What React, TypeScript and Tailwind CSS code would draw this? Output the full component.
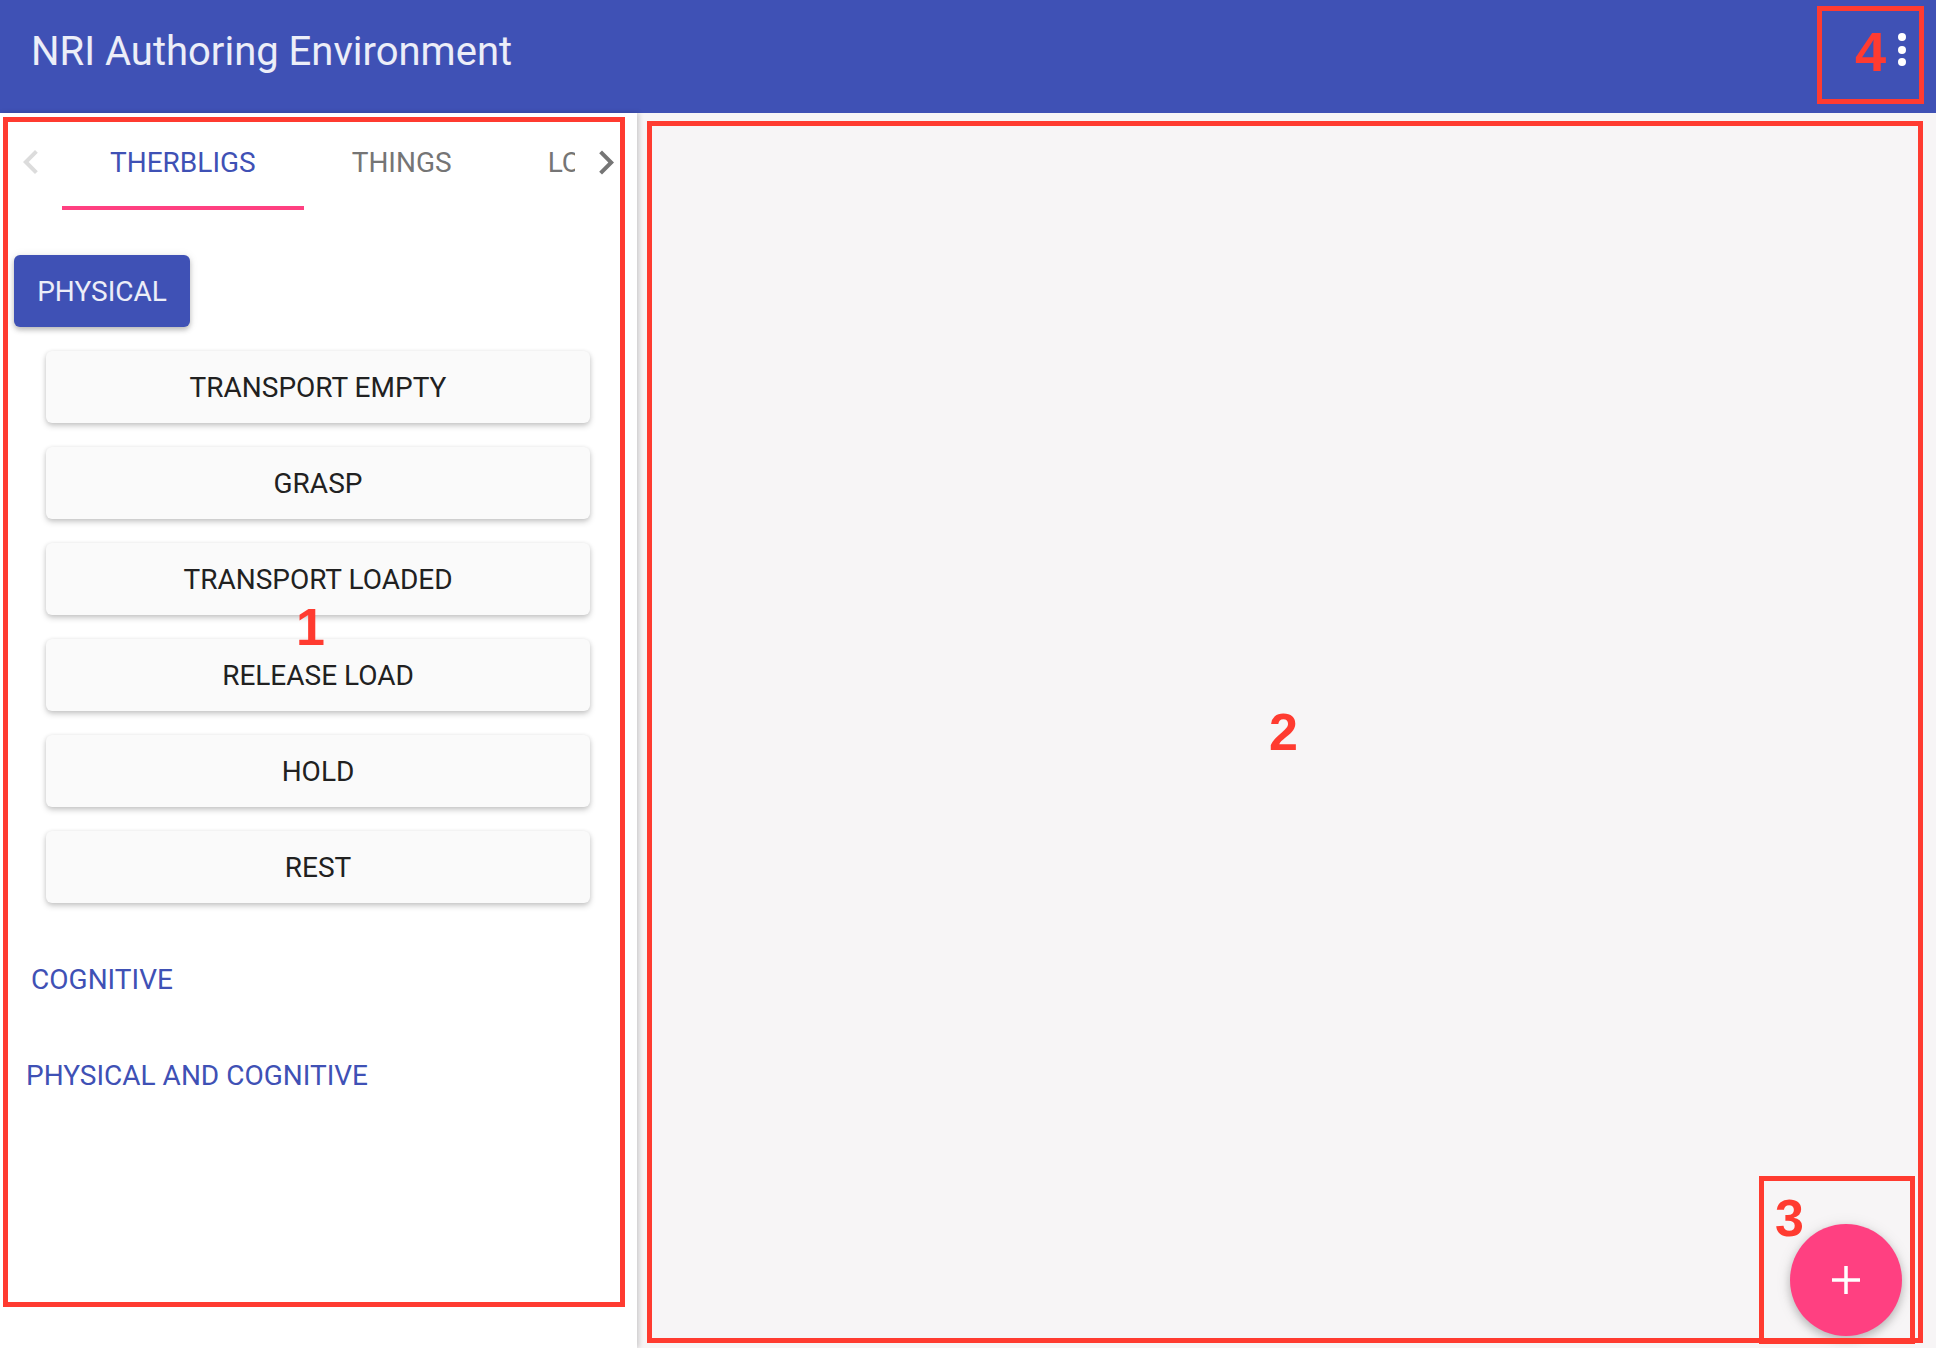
import React from "react";

const physicalItems = [
  "TRANSPORT EMPTY",
  "GRASP",
  "TRANSPORT LOADED",
  "RELEASE LOAD",
  "HOLD",
  "REST",
];

function Chevron({ dir, color }: { dir: "left" | "right"; color: string }) {
  const d =
    dir === "left"
      ? "M15.41 16.09l-4.58-4.59 4.58-4.59L14 5.5l-6 6 6 6z"
      : "M8.59 16.34l4.58-4.59-4.58-4.59L10 5.75l6 6-6 6z";
  return (
    <svg width="48" height="48" viewBox="0 0 24 24">
      <path d={d} fill={color} />
    </svg>
  );
}

function TabBar() {
  return (
    <div className="flex h-[97px] pt-[2px]">
      <div className="w-[62px] shrink-0 flex items-center pl-[7px]">
        <Chevron dir="left" color="#dcdcdc" />
      </div>
      <div className="w-[513px] shrink-0 overflow-hidden flex">
        <div className="relative shrink-0 px-[48px] flex items-center text-[28px] text-[#3f51b5] whitespace-nowrap">
          THERBLIGS
          <span className="absolute left-0 right-0 bottom-0 h-[4px] bg-[#ff4081]" />
        </div>
        <div className="shrink-0 px-[48px] flex items-center text-[28px] text-[#757575] whitespace-nowrap">
          THINGS
        </div>
        <div className="shrink-0 px-[48px] flex items-center text-[28px] text-[#757575] whitespace-nowrap">
          LOCATIONS
        </div>
      </div>
      <div className="w-[62px] shrink-0 flex items-center pl-[7px]">
        <Chevron dir="right" color="#757575" />
      </div>
    </div>
  );
}

function Sidebar() {
  return (
    <div className="relative z-10 w-[637px] shrink-0 bg-white shadow-[2px_0_5px_rgba(0,0,0,0.18)]">
      <TabBar />

      {/* Physical group */}
      <div className="mt-[45px] ml-[14px]">
        <button className="h-[72px] w-[176px] pt-[2px] rounded-[6px] bg-[#3f51b5] text-[28px] text-white/90 shadow-[0_3px_5px_rgba(0,0,0,0.22),0_1px_10px_rgba(0,0,0,0.1)]">
          PHYSICAL
        </button>
      </div>
      <div className="mt-[24px] ml-[46px] flex flex-col gap-[24px]">
        {physicalItems.map((item) => (
          <button
            key={item}
            className="h-[72px] w-[544px] pt-[2px] rounded-[6px] bg-[#fafafa] text-[28px] text-[#212121] shadow-[0_3px_6px_rgba(0,0,0,0.18),0_1px_4px_rgba(0,0,0,0.1)]"
          >
            {item}
          </button>
        ))}
      </div>

      {/* Other groups */}
      <div className="mt-[40px] ml-[14px] flex flex-col items-start gap-[24px]">
        <button className="h-[72px] min-w-[176px] pt-[2px] text-[28px] text-[#3f51b5]">
          COGNITIVE
        </button>
        <button className="h-[72px] -ml-[4px] px-[16px] pt-[2px] text-[28px] text-[#3f51b5] whitespace-nowrap">
          PHYSICAL AND COGNITIVE
        </button>
      </div>
    </div>
  );
}

function Canvas() {
  return (
    <div className="relative flex-1 bg-[#f7f5f6]">
      <button className="absolute right-[34px] bottom-[12px] w-[112px] h-[112px] rounded-full bg-[#ff4081] flex items-center justify-center shadow-[0_4px_8px_rgba(0,0,0,0.2),0_2px_16px_rgba(0,0,0,0.1)]">
        <svg width="30" height="30" viewBox="0 0 30 30">
          <path d="M15 1v28M1 15h28" stroke="white" strokeWidth="3.5" />
        </svg>
      </button>
    </div>
  );
}

export default function App() {
  return (
    <div className="relative w-[1936px] h-[1348px] overflow-hidden font-['Roboto',sans-serif] bg-white flex flex-col">
      {/* App bar */}
      <header className="h-[113px] shrink-0 bg-[#3f51b5] flex items-start pl-[31px] pr-[30px]">
        <h1 className="pt-[32px] text-[40px] leading-none text-white/90 font-normal">
          NRI Authoring Environment
        </h1>
        <div className="ml-auto mt-[33px] flex flex-col gap-[4.5px]">
          <span className="w-[8px] h-[8px] rounded-full bg-white" />
          <span className="w-[8px] h-[8px] rounded-full bg-white" />
          <span className="w-[8px] h-[8px] rounded-full bg-white" />
        </div>
      </header>

      <div className="flex flex-1">
        <Sidebar />
        <Canvas />
      </div>

      {/* annotation overlay */}
      <div className="pointer-events-none absolute z-20 left-[3px] top-[117px] w-[622px] h-[1190px] border-[5px] border-[#ff3b30]" />
      <div className="pointer-events-none absolute z-20 left-[647px] top-[121px] w-[1276px] h-[1222px] border-[5px] border-[#ff3b30]" />
      <div className="pointer-events-none absolute z-20 left-[1759px] top-[1176px] w-[156px] h-[168px] border-[5px] border-[#ff3b30]" />
      <div className="pointer-events-none absolute z-20 left-[1817px] top-[6px] w-[107px] h-[98px] border-[5px] border-[#ff3b30]" />

      <span className="pointer-events-none absolute z-20 left-[296px] top-[601px] text-[52px] leading-none font-bold text-[#ff3b30] font-['Liberation_Sans',Arial,sans-serif]">
        1
      </span>
      <span className="pointer-events-none absolute z-20 left-[1269px] top-[706px] text-[52px] leading-none font-bold text-[#ff3b30] font-['Liberation_Sans',Arial,sans-serif]">
        2
      </span>
      <span className="pointer-events-none absolute z-20 left-[1775px] top-[1192px] text-[52px] leading-none font-bold text-[#ff3b30] font-['Liberation_Sans',Arial,sans-serif]">
        3
      </span>
      <span className="pointer-events-none absolute z-20 left-[1855px] top-[24px] text-[56px] leading-none font-bold text-[#ff3b30] font-['Liberation_Sans',Arial,sans-serif]">
        4
      </span>
    </div>
  );
}
